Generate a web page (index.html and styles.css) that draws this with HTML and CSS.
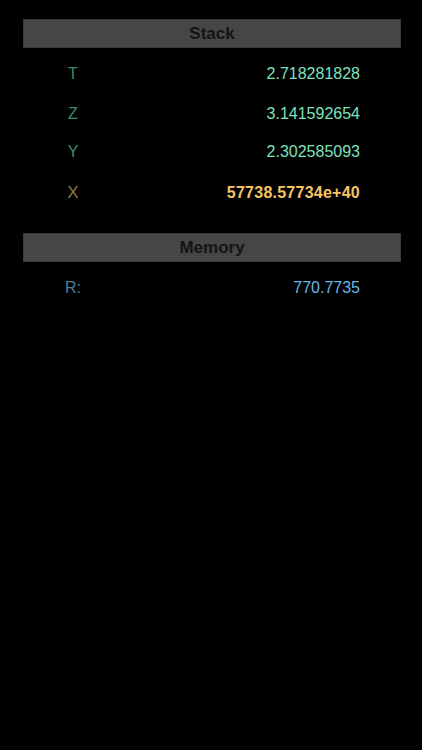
FILE: index.html
```html
<!DOCTYPE html>
<html lang="en">
<head>
  <meta charset="UTF-8">
  <meta name="viewport" content="width=device-width, initial-scale=1.0">
  <title>RPN Stack</title>
  <link rel="stylesheet" href="styles.css">
</head>
<body>
  <div class="panel">
    <div class="section-header">Stack</div>
    <div class="reg-row t-row">
      <span class="reg-label">T</span>
      <span class="reg-value">2.718281828</span>
    </div>
    <div class="reg-row">
      <span class="reg-label">Z</span>
      <span class="reg-value">3.141592654</span>
    </div>
    <div class="reg-row y-row">
      <span class="reg-label">Y</span>
      <span class="reg-value">2.302585093</span>
    </div>
    <div class="reg-row x-row">
      <span class="reg-label">X</span>
      <span class="reg-value">57738.57734e+40</span>
    </div>

    <div class="section-header memory-header">Memory</div>
    <div class="reg-row mem-row">
      <span class="reg-label">R:</span>
      <span class="reg-value">770.7735</span>
    </div>
  </div>
</body>
</html>
```

FILE: styles.css
```css
body {
  margin: 0;
  font-family: "Liberation Sans", Arial, sans-serif;
  background-color: #000;
  color: #fff;
  min-height: 100vh;
}

.panel {
  padding: 19px 21px 0 23px;
  display: flex;
  flex-direction: column;
}

.section-header {
  height: 27px;
  line-height: 28px;
  background-color: #464646;
  border: 1px solid #3a3a3a;
  color: #141414;
  font-weight: bold;
  font-size: 17px;
  text-align: center;
}

.memory-header {
  margin-top: 17px;
}

.reg-row {
  height: 40px;
  display: flex;
  align-items: center;
  justify-content: space-between;
  padding: 0 41px 0 36px;
  font-size: 16px;
}

.t-row {
  margin-top: 6px;
}

.y-row {
  height: 36px;
}

.reg-label {
  width: 28px;
  text-align: center;
  color: #3d8c6e;
}

.reg-value {
  color: #7de2bd;
}

.x-row {
  height: 46px;
}

.x-row .reg-label {
  color: #8f7445;
  font-size: 17px;
}

.x-row .reg-value {
  color: #f6c463;
  font-weight: bold;
  letter-spacing: 0.25px;
}

.mem-row {
  margin-top: 6px;
}

.mem-row .reg-label {
  color: #4d7e9e;
}

.mem-row .reg-value {
  color: #68b9e9;
}
```
